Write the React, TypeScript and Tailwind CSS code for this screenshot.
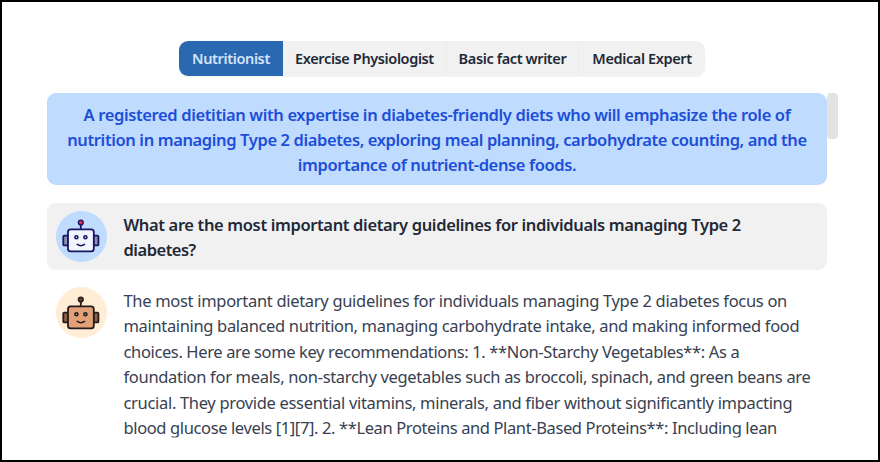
const experts = [
  { label: 'Nutritionist', style: 'w-[104px] bg-[#2b68b2] text-[#d3e3f8] rounded-l-[9px]' },
  { label: 'Exercise Physiologist', style: 'w-[163px] bg-[#f1f1f1] text-[#1f2937]' },
  { label: 'Basic fact writer', style: 'w-[132px] bg-[#f1f1f1] text-[#1f2937] border-l border-[#ececec]' },
  { label: 'Medical Expert', style: 'w-[127px] bg-[#f1f1f1] text-[#1f2937] border-l border-[#ececec] rounded-r-[9px]' },
];

type Line = { text: string; tracking: string };

const description: Line[] = [
  { text: 'A registered dietitian with expertise in diabetes-friendly diets who will emphasize the role of', tracking: 'tracking-[-0.37px]' },
  { text: 'nutrition in managing Type 2 diabetes, exploring meal planning, carbohydrate counting, and the', tracking: 'tracking-[-0.38px]' },
  { text: 'importance of nutrient-dense foods.', tracking: 'tracking-[-0.38px]' },
];

const question: Line[] = [
  { text: 'What are the most important dietary guidelines for individuals managing Type 2', tracking: 'tracking-[-0.36px]' },
  { text: 'diabetes?', tracking: 'tracking-[-0.5px]' },
];

const answer: Line[] = [
  { text: 'The most important dietary guidelines for individuals managing Type 2 diabetes focus on', tracking: 'tracking-[-0.31px]' },
  { text: 'maintaining balanced nutrition, managing carbohydrate intake, and making informed food', tracking: 'tracking-[-0.34px]' },
  { text: 'choices. Here are some key recommendations: 1. **Non-Starchy Vegetables**: As a', tracking: 'tracking-[-0.37px]' },
  { text: 'foundation for meals, non-starchy vegetables such as broccoli, spinach, and green beans are', tracking: 'tracking-[-0.32px]' },
  { text: 'crucial. They provide essential vitamins, minerals, and fiber without significantly impacting', tracking: 'tracking-[-0.32px]' },
  { text: 'blood glucose levels [1][7]. 2. **Lean Proteins and Plant-Based Proteins**: Including lean', tracking: 'tracking-[-0.38px]' },
];

type RobotProps = {
  stroke: string;
  face: string;
  ear: string;
  antenna: string;
};

function Robot({ stroke, face, ear, antenna }: RobotProps) {
  return (
    <svg width="38" height="38" viewBox="0 0 38 38" fill="none" stroke={stroke} strokeWidth="1.8">
      <path d="M18.8 7.5v5" />
      <circle cx="18.8" cy="5.5" r="2.4" fill={antenna} strokeWidth="1.4" />
      <rect x="1.3" y="18.6" width="5" height="9.8" rx="1" fill={ear} />
      <rect x="31.4" y="18.6" width="5" height="9.8" rx="1" fill={ear} />
      <rect x="6" y="12.3" width="25.8" height="22" rx="2.6" fill={face} />
      <circle cx="14.4" cy="20.3" r="1.5" strokeWidth="1.6" />
      <circle cx="23.4" cy="20.3" r="1.5" strokeWidth="1.6" />
      <path d="M15.2 27.4c2.1 1.5 5.3 1.5 7.4 0" strokeWidth="1.5" strokeLinecap="round" />
    </svg>
  );
}

function Lines({ lines }: { lines: Line[] }) {
  return (
    <>
      {lines.map((line) => (
        <span key={line.text} className={`block whitespace-nowrap ${line.tracking}`}>
          {line.text}
        </span>
      ))}
    </>
  );
}

export default function App() {
  return (
    <div className="h-[462px] w-[880px] overflow-hidden border-2 border-black bg-white font-['Noto_Sans',sans-serif] text-[#1f2937]">
      {/* Expert tabs */}
      <div className="ml-[177px] mt-[39px] flex h-[34.5px] w-[526px] rounded-[9px] shadow-[0_1px_2px_rgba(0,0,0,0.06)]">
        {experts.map((expert) => (
          <button
            key={expert.label}
            className={`flex items-center justify-center whitespace-nowrap pt-[2px] text-[14.5px] font-semibold tracking-[-0.38px] ${expert.style}`}
          >
            {expert.label}
          </button>
        ))}
      </div>

      {/* Conversation */}
      <div className="ml-[45px] mt-[17px] flex h-[345px] w-[791px] text-[16.5px] leading-[25.4px]">
        <div className="w-[780px] shrink-0">
          <div className="h-[92.5px] rounded-[9px] bg-[#bfdbfe] pt-[9px] text-center font-semibold text-[#1d4ed8]">
            <Lines lines={description} />
          </div>

          <div className="mt-[17.5px] flex h-[67.5px] rounded-[9px] bg-[#f1f1f1] pl-[8.5px] pt-[8px]">
            <div className="flex size-[51px] items-center justify-center rounded-full bg-[#bfdbfe]">
              <Robot stroke="#1b1464" face="#f1f5fd" ear="#8c92ae" antenna="#f0284a" />
            </div>
            <div className="ml-[17px] pt-[1.5px] font-semibold">
              <Lines lines={question} />
            </div>
          </div>

          {/* the last line's descenders are cut by the bottom of the scroll area */}
          <div className="mt-[8.5px] flex pl-[8.5px] pt-[8.5px] [clip-path:inset(0_0_3px_0)]">
            <div className="flex size-[51px] items-center justify-center rounded-full bg-[#ffedd5]">
              <Robot stroke="#241c1a" face="#e2a078" ear="#8d6048" antenna="#5c3b2d" />
            </div>
            <div className="ml-[17px] pt-px text-[#374151]">
              <Lines lines={answer} />
            </div>
          </div>
        </div>
        <div className="h-[46.5px] w-[11px] rounded-[4px] bg-[#e3e3e3]" />
      </div>
    </div>
  );
}
